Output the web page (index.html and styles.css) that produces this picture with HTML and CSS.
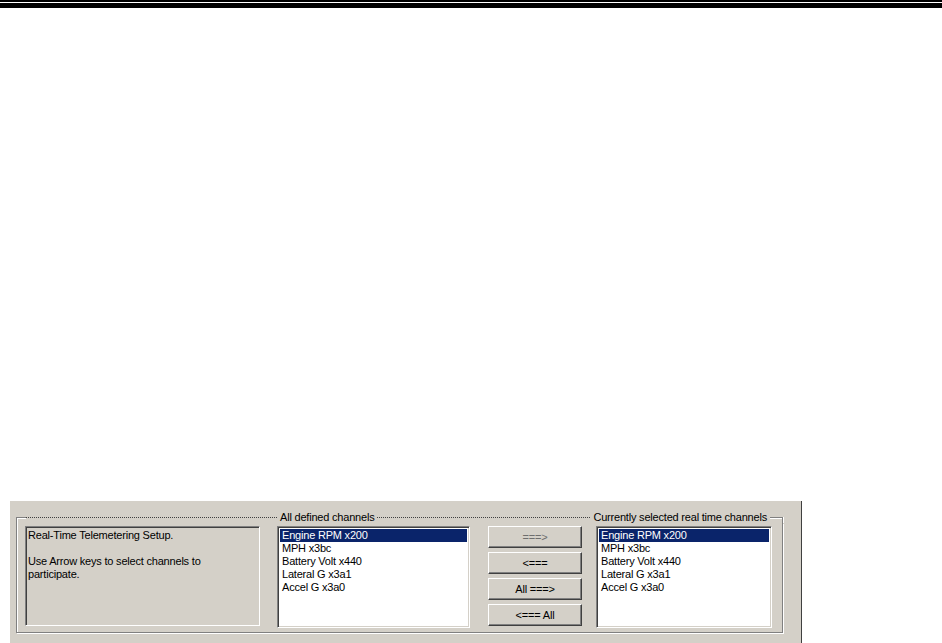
FILE: index.html
```html
<!DOCTYPE html>
<html lang="en">
<head>
    <meta charset="UTF-8">
    <title>Real-Time Telemetering Setup</title>
    <link rel="stylesheet" href="styles.css">
</head>
<body>
    <div class="page-rule">
        <div class="rule-thin"></div>
        <div class="rule-thick"></div>
    </div>

    <div class="dialog">
        <div class="group">
            <div class="group-head">
                <div class="corner corner-left"></div>
                <div class="dots dots-first"></div>
                <span class="legend">All defined channels</span>
                <div class="dots dots-fill"></div>
                <span class="legend">Currently selected real time channels</span>
                <div class="corner corner-right"></div>
            </div>

            <div class="group-body">
                <div class="info-box">
                    <p>Real-Time Telemetering Setup.</p>
                    <p>Use Arrow keys to select channels to participate.</p>
                </div>

                <ul class="listbox list-all">
                    <li class="selected">Engine RPM x200</li>
                    <li>MPH x3bc</li>
                    <li>Battery Volt x440</li>
                    <li>Lateral G x3a1</li>
                    <li>Accel G x3a0</li>
                </ul>

                <div class="buttons">
                    <button class="win-btn" disabled>===&gt;</button>
                    <button class="win-btn">&lt;===</button>
                    <button class="win-btn">All ===&gt;</button>
                    <button class="win-btn">&lt;=== All</button>
                </div>

                <ul class="listbox list-selected">
                    <li class="selected">Engine RPM x200</li>
                    <li>MPH x3bc</li>
                    <li>Battery Volt x440</li>
                    <li>Lateral G x3a1</li>
                    <li>Accel G x3a0</li>
                </ul>
            </div>
        </div>
    </div>
</body>
</html>
```

FILE: styles.css
```css
body {
    margin: 0;
    padding: 0;
    background: #fff;
    font-family: "Liberation Sans", Arial, sans-serif;
    font-size: 11px;
    letter-spacing: -0.2px;
    color: #000;
    overflow: hidden;
}

/* Double rule at the top of the page */
.page-rule {
    height: 501px;
}

.rule-thin {
    height: 2px;
    background: #000;
}

.rule-thick {
    height: 5px;
    margin-top: 1px;
    background: #000;
}

/* Dialog panel */
.dialog {
    width: 769px;
    height: 132px;
    margin-left: 10px;
    padding: 10px 16px 0 6px;
    background: #d4d0c8;
    border-right: 1px solid #404040;
}

.group {
    display: flex;
    flex-direction: column;
    width: 767px;
}

.group-head {
    display: flex;
    align-items: center;
    height: 12px;
}

.corner {
    align-self: flex-end;
    height: 5px;
    border-top: 1px solid #808080;
    box-shadow: inset 0 1px 0 #fff;
}

.corner-left {
    width: 9px;
    border-left: 1px solid #808080;
    box-shadow: inset 1px 1px 0 #fff;
}

.corner-right {
    width: 12px;
    border-right: 1px solid #808080;
    box-shadow: 1px 0 0 #fff, inset 0 1px 0 #fff;
}

.dots {
    height: 0;
    border-top: 1px dotted #404040;
}

.dots-first {
    width: 251px;
}

.dots-fill {
    flex: 1;
}

.legend {
    padding: 0 3px;
    line-height: 12px;
    white-space: nowrap;
}

.group-body {
    display: flex;
    align-items: flex-start;
    height: 102px;
    padding: 3px 0 4px 8px;
    border: 1px solid #808080;
    border-top: none;
    box-shadow: 1px 1px 0 #fff, inset 1px 0 0 #fff;
}

/* Sunken boxes */
.info-box,
.listbox {
    box-sizing: border-box;
    border: 1px solid;
    border-color: #808080 #fff #fff #808080;
    box-shadow: inset 1px 1px 0 #404040, inset -1px -1px 0 #d4d0c8;
}

.info-box {
    width: 235px;
    height: 100px;
    padding: 2px 2px;
    background: #d4d0c8;
}

.info-box p {
    margin: 0 0 13px 0;
    line-height: 13px;
    width: 190px;
}

.listbox {
    margin: 0;
    padding: 2px;
    list-style: none;
    height: 102px;
    background: #fff;
}

.list-all {
    width: 193px;
    margin-left: 17px;
}

.list-selected {
    width: 176px;
    margin-left: 14px;
}

.listbox li {
    height: 13px;
    line-height: 13px;
    padding-left: 2px;
    white-space: nowrap;
}

.listbox li.selected {
    background: #0a246a;
    color: #fff;
}

/* Push buttons */
.buttons {
    display: flex;
    flex-direction: column;
    gap: 4px;
    margin-left: 18px;
}

.win-btn {
    box-sizing: border-box;
    width: 94px;
    height: 22px;
    padding: 0;
    font-family: "Liberation Sans", Arial, sans-serif;
    font-size: 11px;
    letter-spacing: -0.2px;
    color: #000;
    background: #d4d0c8;
    border: 1px solid;
    border-color: #fff #404040 #404040 #fff;
    box-shadow: inset -1px -1px 0 #808080;
}

.win-btn:disabled {
    color: #6e6e6e;
}
```
